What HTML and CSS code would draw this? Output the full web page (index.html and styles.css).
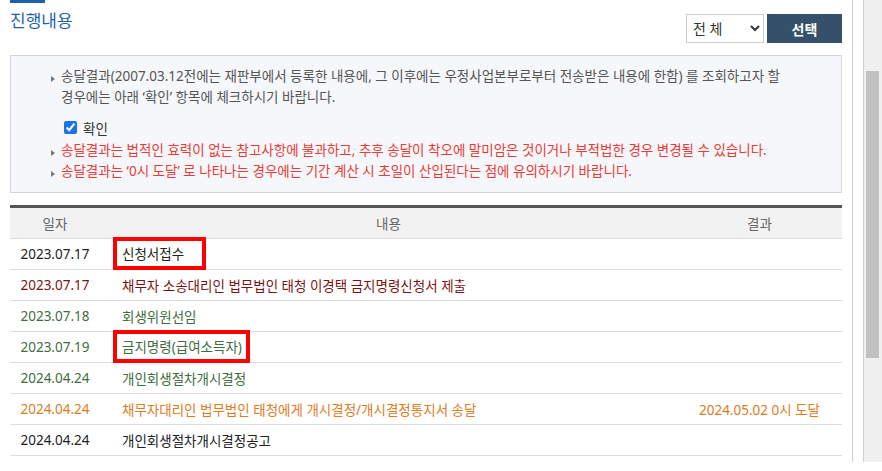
FILE: index.html
```html
<!DOCTYPE html>
<html lang="ko">
<head>
    <meta charset="UTF-8">
    <meta name="viewport" content="width=device-width, initial-scale=1.0">
    <title>진행내용</title>
    <link rel="stylesheet" href="styles.css">
</head>
<body>
    <div class="page">
        <div class="main">
            <div class="title-row">
                <div class="title">
                    <div class="title-bar"></div>
                    <h2>진행내용</h2>
                </div>
                <div class="controls">
                    <select class="filter">
                        <option>전 체</option>
                        <option>기일</option>
                        <option>명령</option>
                        <option>제출서류</option>
                        <option>송달</option>
                    </select>
                    <button class="btn-select">선택</button>
                </div>
            </div>

            <div class="notice">
                <ul>
                    <li class="note">송달결과(2007.03.12전에는 재판부에서 등록한 내용에, 그 이후에는 우정사업본부로부터 전송받은 내용에 한함) 를 조회하고자 할<br>경우에는 아래 ‘확인’ 항목에 체크하시기 바랍니다.</li>
                </ul>
                <label class="check"><input type="checkbox" checked> 확인</label>
                <ul>
                    <li class="warn">송달결과는 법적인 효력이 없는 참고사항에 불과하고, 추후 송달이 착오에 말미암은 것이거나 부적법한 경우 변경될 수 있습니다.</li>
                    <li class="warn">송달결과는 ‘0시 도달’ 로 나타나는 경우에는 기간 계산 시 초일이 산입된다는 점에 유의하시기 바랍니다.</li>
                </ul>
            </div>

            <table class="progress">
                <thead>
                    <tr>
                        <th class="col-date">일자</th>
                        <th class="col-content">내용</th>
                        <th class="col-result">결과</th>
                    </tr>
                </thead>
                <tbody>
                    <tr class="black">
                        <td class="date">2023.07.17</td>
                        <td class="content"><span class="mark mark-wide">신청서접수</span></td>
                        <td class="result"></td>
                    </tr>
                    <tr class="darkred">
                        <td class="date">2023.07.17</td>
                        <td class="content">채무자 소송대리인 법무법인 태청 이경택 금지명령신청서 제출</td>
                        <td class="result"></td>
                    </tr>
                    <tr class="green">
                        <td class="date">2023.07.18</td>
                        <td class="content">회생위원선임</td>
                        <td class="result"></td>
                    </tr>
                    <tr class="green">
                        <td class="date">2023.07.19</td>
                        <td class="content"><span class="mark">금지명령(급여소득자)</span></td>
                        <td class="result"></td>
                    </tr>
                    <tr class="green">
                        <td class="date">2024.04.24</td>
                        <td class="content">개인회생절차개시결정</td>
                        <td class="result"></td>
                    </tr>
                    <tr class="orange">
                        <td class="date">2024.04.24</td>
                        <td class="content">채무자대리인 법무법인 태청에게 개시결정/개시결정통지서 송달</td>
                        <td class="result">2024.05.02 0시 도달</td>
                    </tr>
                    <tr class="black">
                        <td class="date">2024.04.24</td>
                        <td class="content">개인회생절차개시결정공고</td>
                        <td class="result"></td>
                    </tr>
                </tbody>
            </table>
        </div>
        <div class="rail"></div>
        <div class="scrollbar">
            <div class="thumb"></div>
        </div>
    </div>
</body>
</html>
```

FILE: styles.css
```css
body {
    margin: 0;
    font-family: "Noto Sans", "Noto Sans CJK KR", sans-serif;
    font-size: 13.5px;
    color: #222;
    background-color: white;
}
.page {
    display: flex;
    height: 462px;
    overflow: hidden;
}
.main {
    width: 832px;
    padding: 0 10px;
    flex: none;
}
.rail {
    width: 12px;
    box-sizing: border-box;
    border-left: 1px solid #cfcfcf;
    border-right: 1px solid #cfcfcf;
    flex: none;
}
.scrollbar {
    flex: 1;
    background-color: #f0f0f0;
    padding-top: 71px;
}
.thumb {
    width: 13px;
    height: 287px;
    margin-left: 2px;
    background-color: #c1c1c1;
}

/* title */
.title-row {
    display: flex;
    justify-content: space-between;
    align-items: flex-start;
}
.title-bar {
    width: 35px;
    height: 3px;
    background-color: #1d5fa9;
}
.title h2 {
    margin: 7px 0 0;
    font-size: 17px;
    line-height: 22px;
    font-weight: normal;
    color: #1d62ae;
}
.controls {
    display: flex;
    gap: 3px;
    margin-top: 14px;
}
.filter {
    width: 78px;
    height: 29px;
    border: 1px solid #ccc;
    border-radius: 0;
    background-color: white;
    font-family: inherit;
    font-size: 14px;
    color: #333;
    padding: 0 2px;
}
.btn-select {
    width: 75px;
    height: 29px;
    border: none;
    background-color: #34506b;
    color: white;
    font-family: inherit;
    font-size: 14px;
    font-weight: bold;
    cursor: pointer;
}

/* notice box */
.notice {
    margin-top: 12px;
    border: 1px solid #d3d5da;
    background-color: #f6f7fb;
    padding: 10px 8px 10px 40px;
}
.notice ul {
    list-style: none;
    margin: 0;
    padding: 0;
}
.notice li {
    display: flex;
    line-height: 21px;
}
.notice li::before {
    content: "";
    flex: none;
    width: 0;
    height: 0;
    margin: 10px 6px 0 0;
    border-left: 4px solid #777;
    border-top: 3px solid transparent;
    border-bottom: 3px solid transparent;
}
.note {
    color: #555;
}
.warn {
    color: #ea3b34;
}
.check {
    display: flex;
    align-items: center;
    height: 21px;
    margin: 9px 0 2px;
    padding-left: 13px;
    color: #333;
}
.check input {
    width: 13px;
    height: 13px;
    margin: 0 6px 0 0;
    accent-color: #1a73e8;
}

/* table */
.progress {
    width: 100%;
    margin-top: 12px;
    border-collapse: collapse;
    border-top: 3px solid #555;
}
.progress th {
    height: 30px;
    padding: 0;
    background-color: #f2f2f2;
    border-bottom: 1px solid #ddd;
    font-weight: normal;
    color: #666;
}
.progress td {
    height: 30px;
    padding: 0;
    border-bottom: 1px solid #ddd;
}
.col-date {
    width: 90px;
}
.col-result {
    width: 165px;
}
.progress .date,
.progress .result {
    text-align: center;
}
.progress .content {
    padding-left: 22px;
}
.black { color: #222; }
.darkred { color: #7a1414; }
.green { color: #3e6e3e; }
.orange { color: #e07c1e; }

.mark {
    position: relative;
    display: inline-block;
    line-height: 20px;
}
.mark::after {
    content: "";
    position: absolute;
    left: -9px;
    right: -8px;
    top: -7px;
    bottom: -6px;
    border: 4px solid #f00;
}
.mark-wide::after {
    right: -22px;
}
```
